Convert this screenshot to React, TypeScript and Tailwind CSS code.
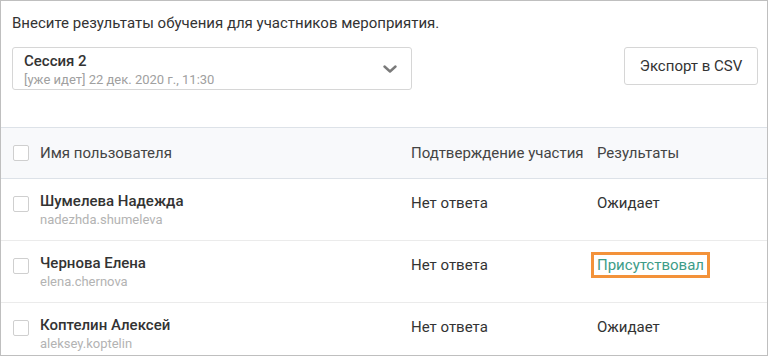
import React from "react";

type Row = {
  name: string;
  login: string;
  confirm: string;
  result: string;
  highlighted?: boolean;
};

const rows: Row[] = [
  { name: "Шумелева Надежда", login: "nadezhda.shumeleva", confirm: "Нет ответа", result: "Ожидает" },
  { name: "Чернова Елена", login: "elena.chernova", confirm: "Нет ответа", result: "Присутствовал", highlighted: true },
  { name: "Коптелин Алексей", login: "aleksey.koptelin", confirm: "Нет ответа", result: "Ожидает" },
];

function Checkbox({ className = "" }: { className?: string }) {
  return (
    <span
      className={
        "block w-4 h-4 shrink-0 rounded-[2px] border border-[#cfcfcf] bg-white " + className
      }
    />
  );
}

export default function App() {
  return (
    <div
      className="w-[768px] h-[356px] overflow-hidden border border-[#bfbfbf] bg-white text-[#333333]"
      style={{ fontFamily: "Roboto, 'Liberation Sans', sans-serif" }}
    >
      <div className="pl-[11px] pr-[9px] pt-3">
        <p className="text-[15px] leading-5 text-[#333333]">
          Внесите результаты обучения для участников мероприятия.
        </p>
        <div className="mt-[14px] flex items-start justify-between">
          <div className="w-[400px] h-[43px] rounded-[3px] border border-[#d6d6d6] pl-[11px] pr-[14px] pt-[3px] flex items-start justify-between">
            <div>
              <div className="text-[15px] leading-5 font-medium text-[#333333]">Сессия 2</div>
              <div className="text-[13px] leading-[18px] text-[#a0a0a0]">
                [уже идет] 22 дек. 2020 г., 11:30
              </div>
            </div>
            <svg width="14" height="9" viewBox="0 0 14 9" className="mt-[14px]">
              <polyline
                points="1.5,1.5 7,6.5 12.5,1.5"
                fill="none"
                stroke="#7a7a7a"
                strokeWidth="2.4"
                strokeLinecap="round"
                strokeLinejoin="round"
              />
            </svg>
          </div>
          <button className="w-[134px] h-[38px] rounded-[3px] border border-[#d6d6d6] bg-white text-[15px] text-[#333333]">
            Экспорт в CSV
          </button>
        </div>
      </div>

      <div className="mt-[37px] border-t border-b border-[#dde2e8] bg-[#f8f9fb] h-[52px] flex items-center text-[15px] text-[#444444]">
        <div className="w-[410px] pl-3 flex items-center gap-[11px]">
          <Checkbox />
          <span>Имя пользователя</span>
        </div>
        <div className="w-[186px]">Подтверждение участия</div>
        <div className="flex-1">Результаты</div>
      </div>

      {rows.map((r) => (
        <div
          key={r.login}
          className="h-[62px] border-b border-[#ebebeb] pt-3 flex items-start text-[15px]"
        >
          <div className="w-[410px] pl-3 flex items-start gap-[11px]">
            <Checkbox className="mt-[5px]" />
            <div>
              <div className="leading-5 font-medium text-[#333333]">{r.name}</div>
              <div className="mt-[1px] text-[13px] leading-4 text-[#b3b3b3]">{r.login}</div>
            </div>
          </div>
          <div className="w-[186px] leading-6 text-[#333333]">{r.confirm}</div>
          <div className="flex-1">
            {r.highlighted ? (
              <span className="inline-block -ml-[6px] -mt-[1px] border-[3px] border-[#f3923a] px-[3px] leading-5 text-[#3d9c88]">
                {r.result}
              </span>
            ) : (
              <span className="leading-6 text-[#333333]">{r.result}</span>
            )}
          </div>
        </div>
      ))}
    </div>
  );
}
